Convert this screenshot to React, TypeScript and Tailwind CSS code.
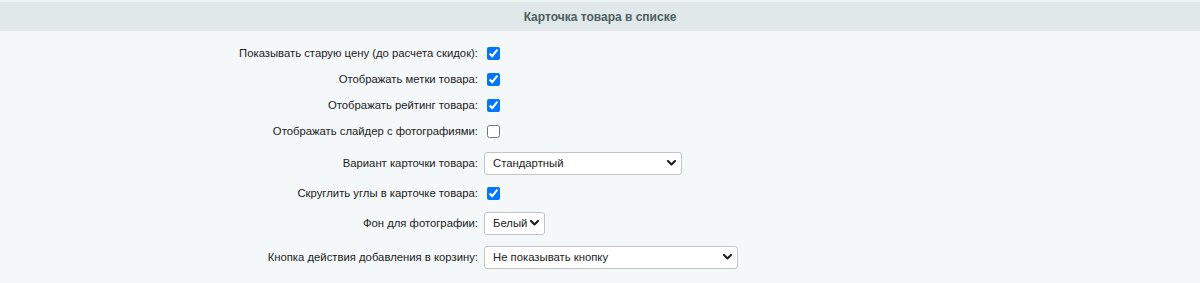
import React from 'react';

type Row =
    | { kind: 'check'; label: string; checked: boolean; h: string }
    | { kind: 'select'; label: string; value: string; options: string[]; w: string; h: string };

const rows: Row[] = [
    { kind: 'check', label: 'Показывать старую цену (до расчета скидок):', checked: true, h: 'h-[26px]' },
    { kind: 'check', label: 'Отображать метки товара:', checked: true, h: 'h-[26px]' },
    { kind: 'check', label: 'Отображать рейтинг товара:', checked: true, h: 'h-[26px]' },
    { kind: 'check', label: 'Отображать слайдер с фотографиями:', checked: false, h: 'h-[26px]' },
    { kind: 'select', label: 'Вариант карточки товара:', value: 'Стандартный', options: ['Стандартный', 'Компактный'], w: 'w-[198px]', h: 'h-[38px]' },
    { kind: 'check', label: 'Скруглить углы в карточке товара:', checked: true, h: 'h-[22px]' },
    { kind: 'select', label: 'Фон для фотографии:', value: 'Белый', options: ['Белый', 'Серый'], w: 'w-[61px]', h: 'h-[38px]' },
    { kind: 'select', label: 'Кнопка действия добавления в корзину:', value: 'Не показывать кнопку', options: ['Не показывать кнопку', 'Добавить в корзину'], w: 'w-[254px]', h: 'h-[30px]' },
];

const Chevron = () => (
    <svg className="pointer-events-none absolute right-[6px] top-1/2 -translate-y-1/2" width="9" height="6" viewBox="0 0 9 6">
        <path d="M1 1l3.5 3.5L8 1" fill="none" stroke="#1a1a1a" strokeWidth="2" strokeLinecap="round" strokeLinejoin="round" />
    </svg>
);

const App: React.FC = () => {
    return (
        <div className="min-h-[283px] w-full bg-[#f4f8f9] font-['Liberation_Sans',Arial,sans-serif] text-[11.3px] text-[#222]">
            {/* header */}
            <div className="border-t-2 border-[#edf2f2] bg-[#e0e8e9] h-[31px] flex items-center justify-center">
                <span className="font-bold text-[12px] text-[#4d5e62]">Карточка товара в списке</span>
            </div>

            {/* settings */}
            <div className="pt-[9px] flex flex-col">
                {rows.map((row, idx) => (
                    <div key={idx} className={`flex items-center ${row.h}`}>
                        <div className="w-[40%] text-right pr-[2px]">{row.label}</div>
                        <div className="flex items-center pl-[4px]">
                            {row.kind === 'check' ? (
                                <input type="checkbox" defaultChecked={row.checked} className="ml-[3px] w-[13px] h-[13px]" />
                            ) : (
                                <div className={`relative ${row.w}`}>
                                    <select
                                        defaultValue={row.value}
                                        className="appearance-none w-full h-[23px] bg-white border border-[#c4c4c4] rounded-[3px] pl-[8px] pr-[16px] text-[11.3px] text-[#222] leading-[21px]"
                                    >
                                        {row.options.map((o) => (
                                            <option key={o}>{o}</option>
                                        ))}
                                    </select>
                                    <Chevron />
                                </div>
                            )}
                        </div>
                    </div>
                ))}
            </div>
        </div>
    );
};

export default App;
